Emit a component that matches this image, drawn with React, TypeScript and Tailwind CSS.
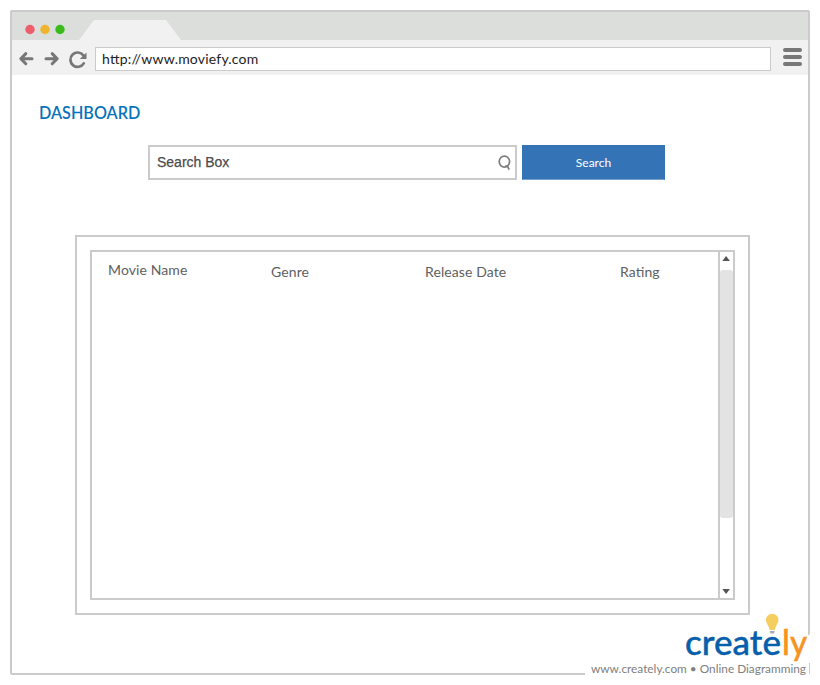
import React from "react";

function BrowserBar() {
  return (
    <header className="h-[63px] shrink-0">
      <div className="flex h-7 items-end bg-[#dcdedb]">
        <svg className="h-7 w-[67px]" viewBox="12 12 67 28">
          <circle cx="30" cy="29.5" r="4.7" fill="#ed5e6d" />
          <circle cx="45" cy="29.5" r="4.7" fill="#edb52e" />
          <circle cx="60" cy="29.5" r="4.7" fill="#3abb1c" />
        </svg>
        <svg className="h-5 w-[102px]" viewBox="0 0 102 20">
          <path d="M0 20L15 0H87L102 20Z" fill="#f1f1f1" />
        </svg>
      </div>
      <div className="flex h-[35px] bg-[#f1f1f1]">
        <svg className="h-[35px] w-[83px] shrink-0" viewBox="12 40 83 35" fill="none" stroke="#777" strokeWidth="3" strokeLinecap="round" strokeLinejoin="round">
          <path d="M32 58.7H21.5M25.8 53.6L20.8 58.7L25.8 63.8" />
          <path d="M46 58.7H56.5M52.2 53.6L57.2 58.7L52.2 63.8" />
          <path d="M83.4 55.4A7.2 7.2 0 1 0 83.8 63.4" strokeWidth="2.7" />
          <path d="M86.5 52.5V59H79.8Z" fill="#777" stroke="none" />
        </svg>
        <div className="mt-[7px] flex h-6 w-[676px] items-center border border-[#cbcbcb] bg-white pl-[6px] text-[14px] leading-none text-[#222]">
          <span className="tracking-[0.2px] [font-feature-settings:'liga'_1]">http://www.moviefy.com</span>
        </div>
        <div className="mt-2 ml-3 flex flex-col gap-[3px]">
          <i className="h-1 w-[19px] rounded-full bg-[#777]" />
          <i className="h-1 w-[19px] rounded-full bg-[#777]" />
          <i className="h-1 w-[19px] rounded-full bg-[#777]" />
        </div>
      </div>
    </header>
  );
}

function SearchRow() {
  return (
    <div className="mt-[22px] ml-[136px] flex gap-[5px]">
      <div className="flex h-[35px] w-[369px] items-center justify-between border-2 border-[#cbcbcb] pr-[3px] pl-[7px]">
        <span className="pb-[2px] font-['Liberation_Sans',sans-serif] text-[14px] leading-none text-[#4c4c4c] [-webkit-text-stroke:0.25px_#4c4c4c]">Search Box</span>
        <svg className="h-4 w-[14px]" viewBox="0 0 14 16" fill="none" stroke="#7d7d7d" strokeWidth="1.7">
          <ellipse cx="6.4" cy="6.6" rx="5.2" ry="5.5" />
          <path d="M7.2 10.9L9.6 11.5L11.2 14.6" />
        </svg>
      </div>
      <button className="h-[35px] w-[143px] border border-[#3573b7] border-b-[#77a0d2] bg-[#3573b7] text-[12px] leading-none text-white">Search</button>
    </div>
  );
}

function MovieTable() {
  return (
    <div className="mt-[55px] ml-[63px] h-[380px] w-[675px] border-2 border-[#cbcbcb] p-[13px]">
      <div className="flex h-[350px] w-[645px] border-2 border-[#cbcbcb] text-[14px] leading-[18px] text-[#606060]">
        <div className="flex w-[626px] pt-[11px] pl-4 tracking-[0.1px] [font-feature-settings:'liga'_1]">
          <span className="-mt-[2px] w-[163px]">Movie Name</span>
          <span className="w-[154px]">Genre</span>
          <span className="w-[195px]">Release Date</span>
          <span>Rating</span>
        </div>
        <div className="flex w-[15px] flex-col items-center border-l-2 border-[#cbcbcb]">
          <svg className="mt-1 h-[5px] w-[9px]" viewBox="0 0 9 5"><path d="M0.3 5L4.1 0L7.9 5Z" fill="#555" /></svg>
          <div className="mt-[9px] h-[248px] w-[13px] rounded-[3px] bg-[#e3e3e3]" />
          <svg className="mt-[71px] h-[5px] w-[9px]" viewBox="0 0 9 5"><path d="M0.3 0H7.9L4.1 5Z" fill="#555" /></svg>
        </div>
      </div>
    </div>
  );
}

function Watermark() {
  return (
    <div className="absolute top-[610px] left-[585px] h-[70px] w-[225px]">
      <svg className="h-[70px] w-[225px]" viewBox="585 610 225 70">
        <path d="M806 637L810 634V663H806ZM585 663H809V678H585Z" fill="#fff" />
        <path d="M769.5 630C769.5 626 766 624 766 620A6.2 6.2 0 0 1 778.4 620C778.4 624 775 626 775 630Z" fill="#f5ce60" />
        <path d="M769.7 631H774.8L774 633.5H770.5Z" fill="#aaa" />
        <g fontSize="34" fontWeight="500" strokeWidth="0.4" strokeLinejoin="round">
          <text x="685" y="655" textLength="96" lengthAdjust="spacingAndGlyphs" fill="#075fac" stroke="#075fac">create</text>
          <text x="782" y="655" textLength="25" lengthAdjust="spacingAndGlyphs" fill="#f7931e" stroke="#f7931e">ly</text>
        </g>
        <text x="591" y="673" fontSize="12" textLength="215" lengthAdjust="spacingAndGlyphs" fill="#808080">www.creately.com • Online Diagramming</text>
      </svg>
    </div>
  );
}

export default function App() {
  return (
    <main className="relative h-[685px] w-[820px] bg-white p-[10px] font-[Lato,sans-serif]">
      <section className="flex h-[665px] w-[800px] flex-col rounded-[2px] border-2 border-[#cbcbcb] bg-white">
        <BrowserBar />
        <h1 className="mt-[28px] ml-[27px] text-[16.2px] leading-5 font-semibold text-[#0873bb]">DASHBOARD</h1>
        <SearchRow />
        <MovieTable />
      </section>
      <Watermark />
    </main>
  );
}
